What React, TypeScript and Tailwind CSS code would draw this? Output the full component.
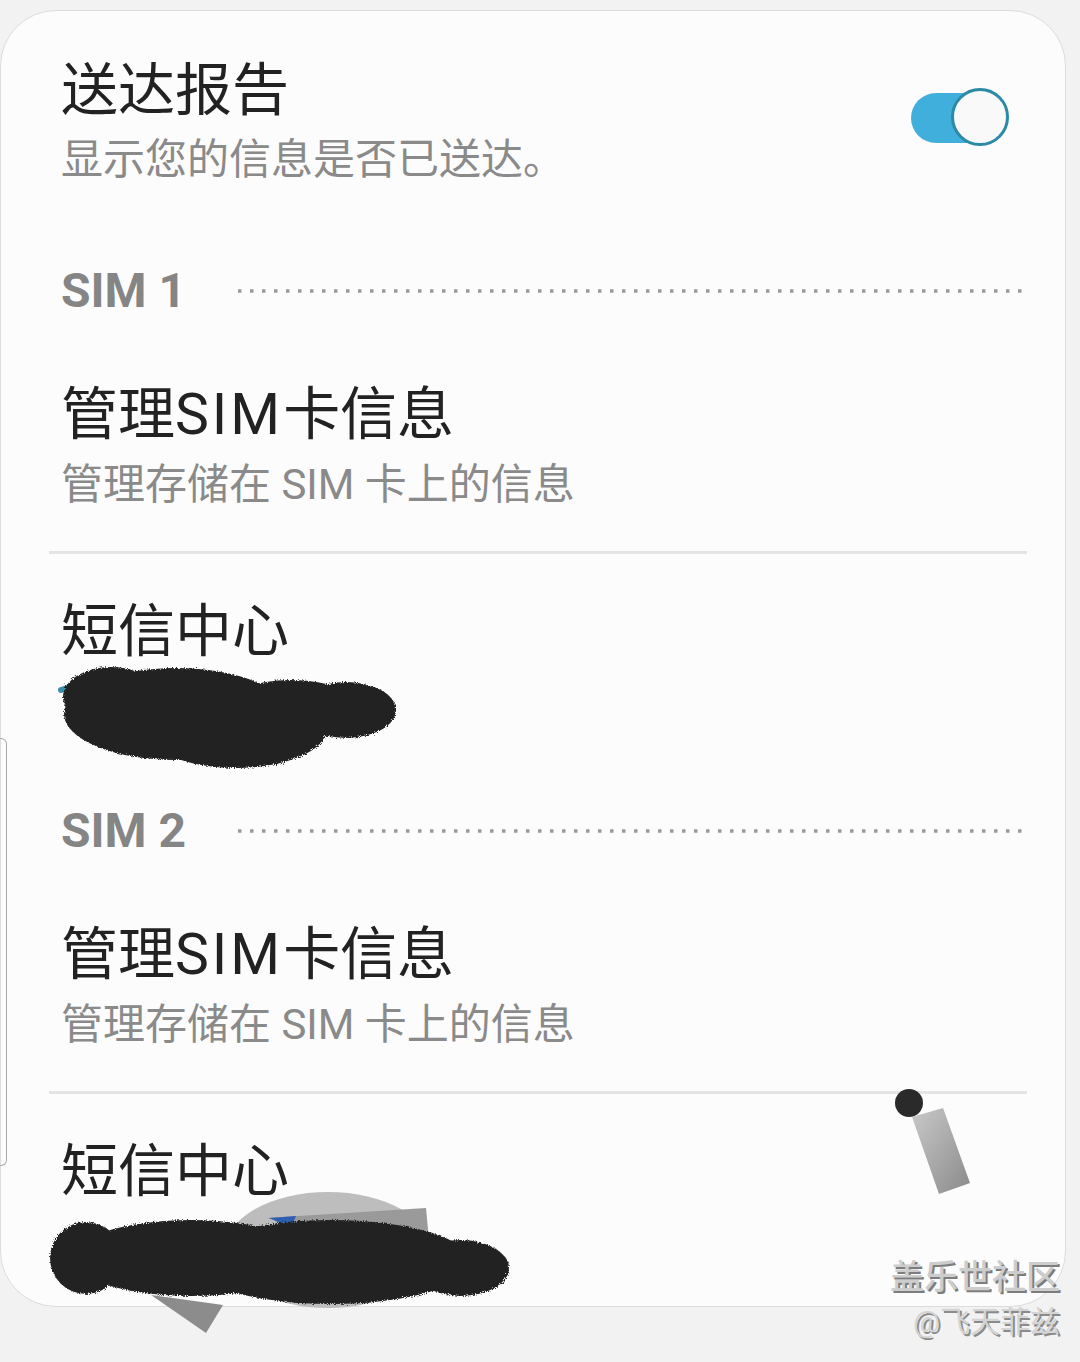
const cjk = "font-['Roboto','Noto_Sans_CJK_SC',sans-serif]";

function DottedRule() {
  return (
    <svg className="h-[4px] flex-1" preserveAspectRatio="none">
      <line x1="2" y1="2" x2="100%" y2="2" stroke="#9a9a9a" strokeWidth="3.5" strokeDasharray="3.5 8.5" />
    </svg>
  );
}

function Toggle() {
  return (
    <div className="relative h-[58px] w-[98px]">
      <div className="absolute left-0 top-[5px] h-[50px] w-[80px] rounded-full bg-[#41afdc]" />
      <div className="absolute right-0 top-0 h-[58px] w-[58px] rounded-full border-[3px] border-[#2b8aa5] bg-[#f9f9f9]" />
    </div>
  );
}

function Section({ label, scribble }: { label: string; scribble: React.ReactNode }) {
  return (
    <>
      <div className="flex h-[60px] items-center gap-[50px] pl-[60px] pr-[41px]">
        <span className="font-['Roboto',sans-serif] text-[48px] font-bold leading-[60px] text-[#858585]">{label}</span>
        <DottedRule />
      </div>
      <div className="mt-[59px] pl-[60px]">
        <div className="text-[57px] leading-[70px] text-[#222]">
          管理<span className="tracking-[3px]">SIM</span>卡信息
        </div>
        <div className="mt-[10px] text-[42px] leading-[50px] text-[#8a8a8a]">管理存储在 SIM 卡上的信息</div>
      </div>
      <div className="mt-[41px] ml-[48px] mr-[38px] h-[3px] bg-[#e4e4e4]" />
      <div className="mt-[43px] pl-[60px] text-[57px] leading-[70px] text-[#222]">短信中心</div>
      <div className="relative h-[134px]">{scribble}</div>
    </>
  );
}

function Fuzz({ id }: { id: string }) {
  return (
    <filter id={id} x="-10%" y="-10%" width="120%" height="120%">
      <feTurbulence type="fractalNoise" baseFrequency="0.9" numOctaves="2" result="n" />
      <feDisplacementMap in="SourceGraphic" in2="n" scale="5" />
    </filter>
  );
}

function ScribbleOne() {
  // page origin of this svg: (50, 652)
  return (
    <svg className="absolute left-[50px] top-[-15px]" width="360" height="125" viewBox="0 0 360 125">
      <defs>
        <Fuzz id="fz1" />
      </defs>
      <path d="M10 38 L22 34" stroke="#3a8fb0" strokeWidth="6" strokeLinecap="round" />
      <g fill="#222" filter="url(#fz1)">
        <ellipse cx="60" cy="45" rx="48" ry="30" />
        <ellipse cx="125" cy="62" rx="112" ry="46" />
        <ellipse cx="185" cy="78" rx="90" ry="38" />
        <ellipse cx="240" cy="58" rx="70" ry="30" />
        <ellipse cx="295" cy="58" rx="50" ry="28" />
      </g>
    </svg>
  );
}

function ScribbleTwo() {
  // page origin of this svg: (40, 1180)
  return (
    <svg className="absolute left-[40px] top-[-27px]" width="480" height="160" viewBox="0 0 480 160">
      <defs>
        <Fuzz id="fz2" />
      </defs>
      <ellipse cx="287" cy="70" rx="103" ry="58" fill="#bdbdbd" />
      <polygon points="110,115 165,153 182,125" fill="#8c8c8c" />
      <polygon points="225,38 385,28 388,60" fill="#9a9a9a" />
      <polygon points="228,38 255,36 250,48" fill="#2f5fb0" />
      <g fill="#222" filter="url(#fz2)">
        <ellipse cx="45" cy="78" rx="36" ry="36" />
        <ellipse cx="150" cy="78" rx="120" ry="38" />
        <ellipse cx="290" cy="82" rx="140" ry="42" />
        <ellipse cx="420" cy="88" rx="48" ry="28" />
      </g>
    </svg>
  );
}

export default function App() {
  return (
    <div className={`relative min-h-[1362px] overflow-hidden bg-[#f2f2f2] ${cjk}`}>
      <div className="pt-[10px]">
        <div className="relative h-[1297px] w-[1066px] rounded-[56px] border border-[#dcdcdc] bg-[#fcfcfc]">
          <div className="flex items-start justify-between pl-[60px] pr-[56px] pt-[45px]">
            <div>
              <div className="text-[57px] leading-[70px] text-[#222]">送达报告</div>
              <div className="mt-[9px] text-[42px] leading-[50px] text-[#8a8a8a]">显示您的信息是否已送达。</div>
            </div>
            <div className="mt-[32px]">
              <Toggle />
            </div>
          </div>
          <div className="mt-[76px]">
            <Section label="SIM 1" scribble={<ScribbleOne />} />
            <Section label="SIM 2" scribble={<ScribbleTwo />} />
          </div>

          <svg className="absolute left-[890px] top-[1072px]" width="90" height="120" viewBox="0 0 90 120">
            <defs>
              <linearGradient id="stick" x1="0" y1="0" x2="1" y2="1">
                <stop offset="0" stopColor="#c9c9c9" />
                <stop offset="1" stopColor="#8a8a8a" />
              </linearGradient>
            </defs>
            <polygon points="21,34 52,25 79,100 48,111" fill="url(#stick)" />
            <circle cx="18" cy="20" r="14" fill="#2a2a2a" />
          </svg>
        </div>
      </div>

      <div className="absolute left-0 top-[738px] h-[428px] w-[7px] rounded-r-[6px] border border-l-0 border-[#a8a8a8]" />

      <div className="absolute right-[20px] top-[1255px] flex flex-col items-end">
        <div className="text-[34px] font-medium leading-[44px] text-[#cdcdcd] [text-shadow:2px_2px_0_#7d7d7d]">盖乐世社区</div>
        <div className="mt-[4px] text-[30px] leading-[38px] text-[#d4d4d4] [text-shadow:2px_2px_0_#8a8a8a]">@飞天菲兹</div>
      </div>
    </div>
  );
}
